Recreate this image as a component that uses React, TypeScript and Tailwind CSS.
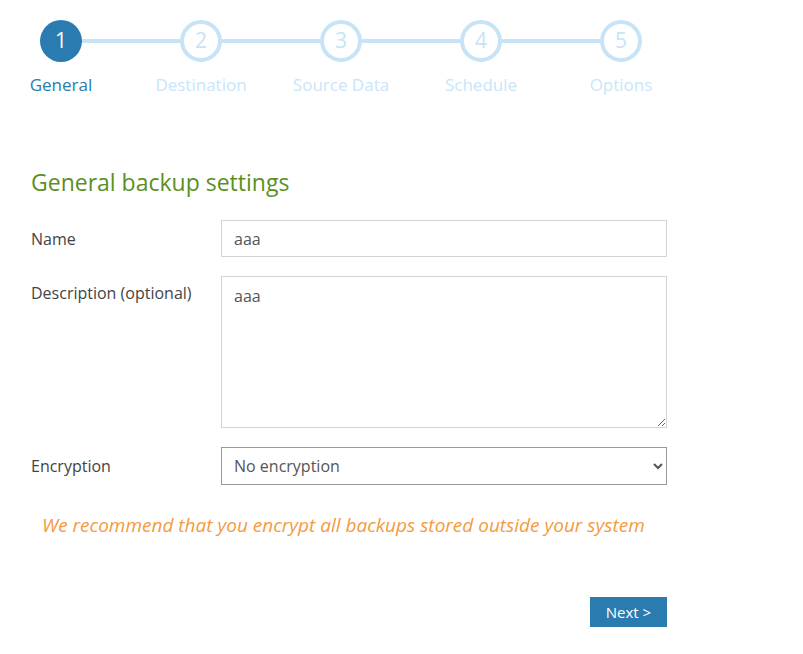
import React from "react";

const steps = ["General", "Destination", "Source Data", "Schedule", "Options"];

const font = { fontFamily: "'Open Sans', 'Noto Sans', sans-serif" };

const App = () => {
  const [name, setName] = React.useState("aaa");
  const [desc, setDesc] = React.useState("aaa");

  return (
    <div className="min-h-[654px] w-[803px] bg-white text-[#444]" style={font}>
      {/* Wizard steps */}
      <div className="flex items-start pl-[40px] pt-[20px]">
        {steps.map((label, i) => (
          <React.Fragment key={label}>
            <div className="flex w-[42px] flex-col items-center">
              <div
                className={
                  i === 0
                    ? "flex h-[42px] w-[42px] items-center justify-center rounded-full bg-[#2a7bb0] text-[21px] text-white"
                    : "flex h-[42px] w-[42px] items-center justify-center rounded-full border-[4px] border-[#c7e3f6] bg-white text-[21px] text-[#c7e3f6]"
                }
              >
                {i + 1}
              </div>
              <div
                className={
                  "mt-[12px] whitespace-nowrap text-[17px] leading-[22px] " +
                  (i === 0 ? "text-[#2a7bb0]" : "text-[#c9e5f7]")
                }
              >
                {label}
              </div>
            </div>
            {i < steps.length - 1 && (
              <div className="mt-[19px] h-[4px] w-[98px] bg-[#c7e3f6]" />
            )}
          </React.Fragment>
        ))}
      </div>

      <div className="w-[667px] pl-[31px] pt-[71px]">
        <h2 className="text-[23px] leading-[30px] text-[#5b8f1f]">General backup settings</h2>

        <div className="mt-[23px] flex flex-col gap-[19px]">
          <div className="flex items-center">
            <label className="w-[190px] text-[16px]">Name</label>
            <input
              value={name}
              onChange={(e) => setName(e.target.value)}
              className="h-[37px] flex-1 border border-[#d4d4d4] px-[12px] text-[16px] text-[#555] outline-none"
            />
          </div>

          <div className="flex items-start">
            <label className="w-[190px] pt-[5px] text-[16px]">Description (optional)</label>
            <textarea
              value={desc}
              onChange={(e) => setDesc(e.target.value)}
              className="h-[152px] flex-1 border border-[#d4d4d4] px-[12px] py-[7px] text-[16px] text-[#555] outline-none"
            />
          </div>

          <div className="flex items-center">
            <label className="w-[190px] text-[16px]">Encryption</label>
            <select className="h-[38px] flex-1 border border-[#999] bg-white px-[8px] text-[16px] text-[#555] outline-none">
              <option>No encryption</option>
            </select>
          </div>
        </div>

        <p className="mt-[26px] pl-[11px] text-[19px] italic leading-[28px] text-[#f39b3f]">
          We recommend that you encrypt all backups stored outside your system
        </p>

        <div className="mt-[58px] flex justify-end">
          <button className="h-[30px] w-[77px] bg-[#2a7bb0] text-[15px] text-white">Next &gt;</button>
        </div>
      </div>
    </div>
  );
};

export default App;
